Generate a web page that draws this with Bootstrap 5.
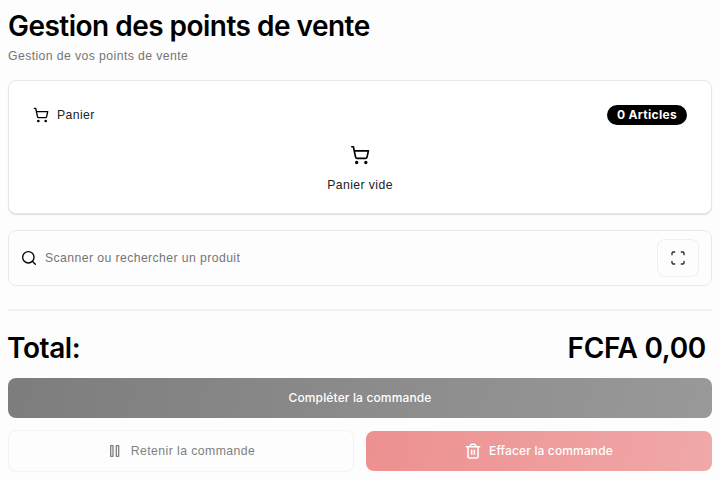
<!DOCTYPE html>
<html lang="fr">
<head>
<meta charset="utf-8">
<meta name="viewport" content="width=device-width, initial-scale=1">
<title>Gestion des points de vente</title>
<link href="https://cdn.jsdelivr.net/npm/bootstrap@5.3.0/dist/css/bootstrap.min.css" rel="stylesheet">
<style>
body{background:#fdfdfd;color:#000;font-family:Inter,"Liberation Sans",sans-serif;font-size:12.25px;line-height:18px;height:480px;overflow:hidden}
svg{fill:none;stroke:currentColor;stroke-width:2;stroke-linecap:round;stroke-linejoin:round;flex:none}
.pos-title{font-size:28px;line-height:36px;font-weight:600;letter-spacing:-.3px;white-space:nowrap}
.t-head{letter-spacing:-.52px}
.t-total{letter-spacing:-.4px;margin-left:-1px}
.pos-muted{color:#757575}
.t-sub,.t-label,.t-search,.t-hold{font-family:"Liberation Sans",Arial,sans-serif;font-size:12.25px;letter-spacing:.4px}
.t-sub{line-height:16px}
.t-label{color:#222}
.t-hold{letter-spacing:.42px}
.t-empty{margin-top:11px}
.pos-card{border:1px solid #e7e7e7;border-radius:8px;background:#fff;height:134px;padding:24px;box-shadow:0 1px 1px #dedede}
.pos-pill{font-size:12px;font-weight:700;line-height:20px;height:20px;width:80px;padding:0;letter-spacing:.3px}
.pos-search{height:56px;border:1px solid #e9e9e9;border-radius:8px;padding:0 12px}
.scan-btn{width:42px;height:38px;border:1px solid #efefef;border-radius:8px;padding:0}
.pos-rule{height:2px;margin-top:23px;background:#f1f1f1}
.pos-total{margin-top:19px;height:48px;padding-right:6px}
.pos-btn{height:40px;border:0;border-radius:8px;padding:0;font-size:12px;line-height:18px;font-weight:500;color:#fff;letter-spacing:.14px}
.pos-actions{margin-top:12px;gap:12px}
.pos-actions>.btn{width:346px;gap:8px}
.btn-done,.btn-done:hover{background:linear-gradient(100deg,#7d7d7d,#999);color:#fff}
.btn-hold{height:42px;border:1px solid #f3f3f3;color:#808080;font-weight:400}
.btn-clear,.btn-clear:hover{background:linear-gradient(100deg,#ed9090,#f0a8a8);color:#fff}
.btn-clear svg{stroke-width:2.3}
</style>
<script src="https://cdn.jsdelivr.net/npm/bootstrap@5.3.0/dist/js/bootstrap.bundle.min.js"></script>
</head>
<body>
<main class="px-2 pt-2">
  <h1 class="pos-title t-head mb-0">Gestion des points de vente</h1>
  <p class="pos-muted t-sub mt-1 mb-3">Gestion de vos points de vente</p>
  <section class="pos-card mb-3">
    <div class="d-flex justify-content-between align-items-center">
      <div class="d-flex align-items-center gap-2 t-label">
        <svg width="16" height="16" viewBox="0 0 24 24" color="#000"><circle cx="8" cy="21" r="1"/><circle cx="19" cy="21" r="1"/><path d="M2.05 2.05h2l2.66 12.42a2 2 0 0 0 2 1.58h9.78a2 2 0 0 0 1.95-1.57l1.65-7.43H5.12"/></svg>
        <span>Panier</span>
      </div>
      <span class="badge rounded-pill bg-black pos-pill">0 Articles</span>
    </div>
    <div class="d-flex flex-column align-items-center t-label">
      <svg class="mt-3 pt-1" width="20" height="24" viewBox="0 0 24 24" color="#000"><circle cx="8" cy="21" r="1"/><circle cx="19" cy="21" r="1"/><path d="M2.05 2.05h2l2.66 12.42a2 2 0 0 0 2 1.58h9.78a2 2 0 0 0 1.95-1.57l1.65-7.43H5.12"/></svg>
      <span class="t-empty">Panier vide</span>
    </div>
  </section>
  <section class="pos-search d-flex align-items-center">
    <svg width="16" height="16" viewBox="0 0 24 24"><circle cx="11" cy="11" r="8.5"/><path d="m21.500 21.500-4.500-4.500"/></svg>
    <span class="pos-muted t-search ms-2 flex-grow-1">Scanner ou rechercher un produit</span>
    <button class="btn scan-btn d-flex align-items-center justify-content-center" type="button" aria-label="Scanner">
      <svg width="16" height="16" viewBox="0 0 24 24"><path d="M3 7V5a2 2 0 0 1 2-2h2M17 3h2a2 2 0 0 1 2 2v2M21 17v2a2 2 0 0 1-2 2h-2M7 21H5a2 2 0 0 1-2-2v-2"/></svg>
    </button>
  </section>
  <div class="pos-rule"></div>
  <div class="pos-total pos-title d-flex justify-content-between">
    <span class="t-total">Total:</span><span>FCFA 0,00</span>
  </div>
  <button class="btn pos-btn btn-done w-100 d-block" type="button">Compléter la commande</button>
  <div class="pos-actions d-flex align-items-center">
    <button class="btn pos-btn btn-hold d-flex align-items-center justify-content-center" type="button">
      <svg width="16" height="16" viewBox="0 0 24 24"><rect x="5.500" y="4" width="3.500" height="16"/><rect x="14" y="4" width="3.500" height="16"/></svg>
      <span class="t-hold">Retenir la commande</span>
    </button>
    <button class="btn pos-btn btn-clear d-flex align-items-center justify-content-center" type="button">
      <svg width="16" height="16" viewBox="0 0 24 24"><path d="M2 5.500h20M19.500 5.500v15a2 2 0 0 1-2 2h-11a2 2 0 0 1-2-2v-15M8 5.500V4a2 2 0 0 1 2-2h4a2 2 0 0 1 2 2v1.500M10 11v6M14 11v6"/></svg>
      <span>Effacer la commande</span>
    </button>
  </div>
</main>
</body>
</html>
